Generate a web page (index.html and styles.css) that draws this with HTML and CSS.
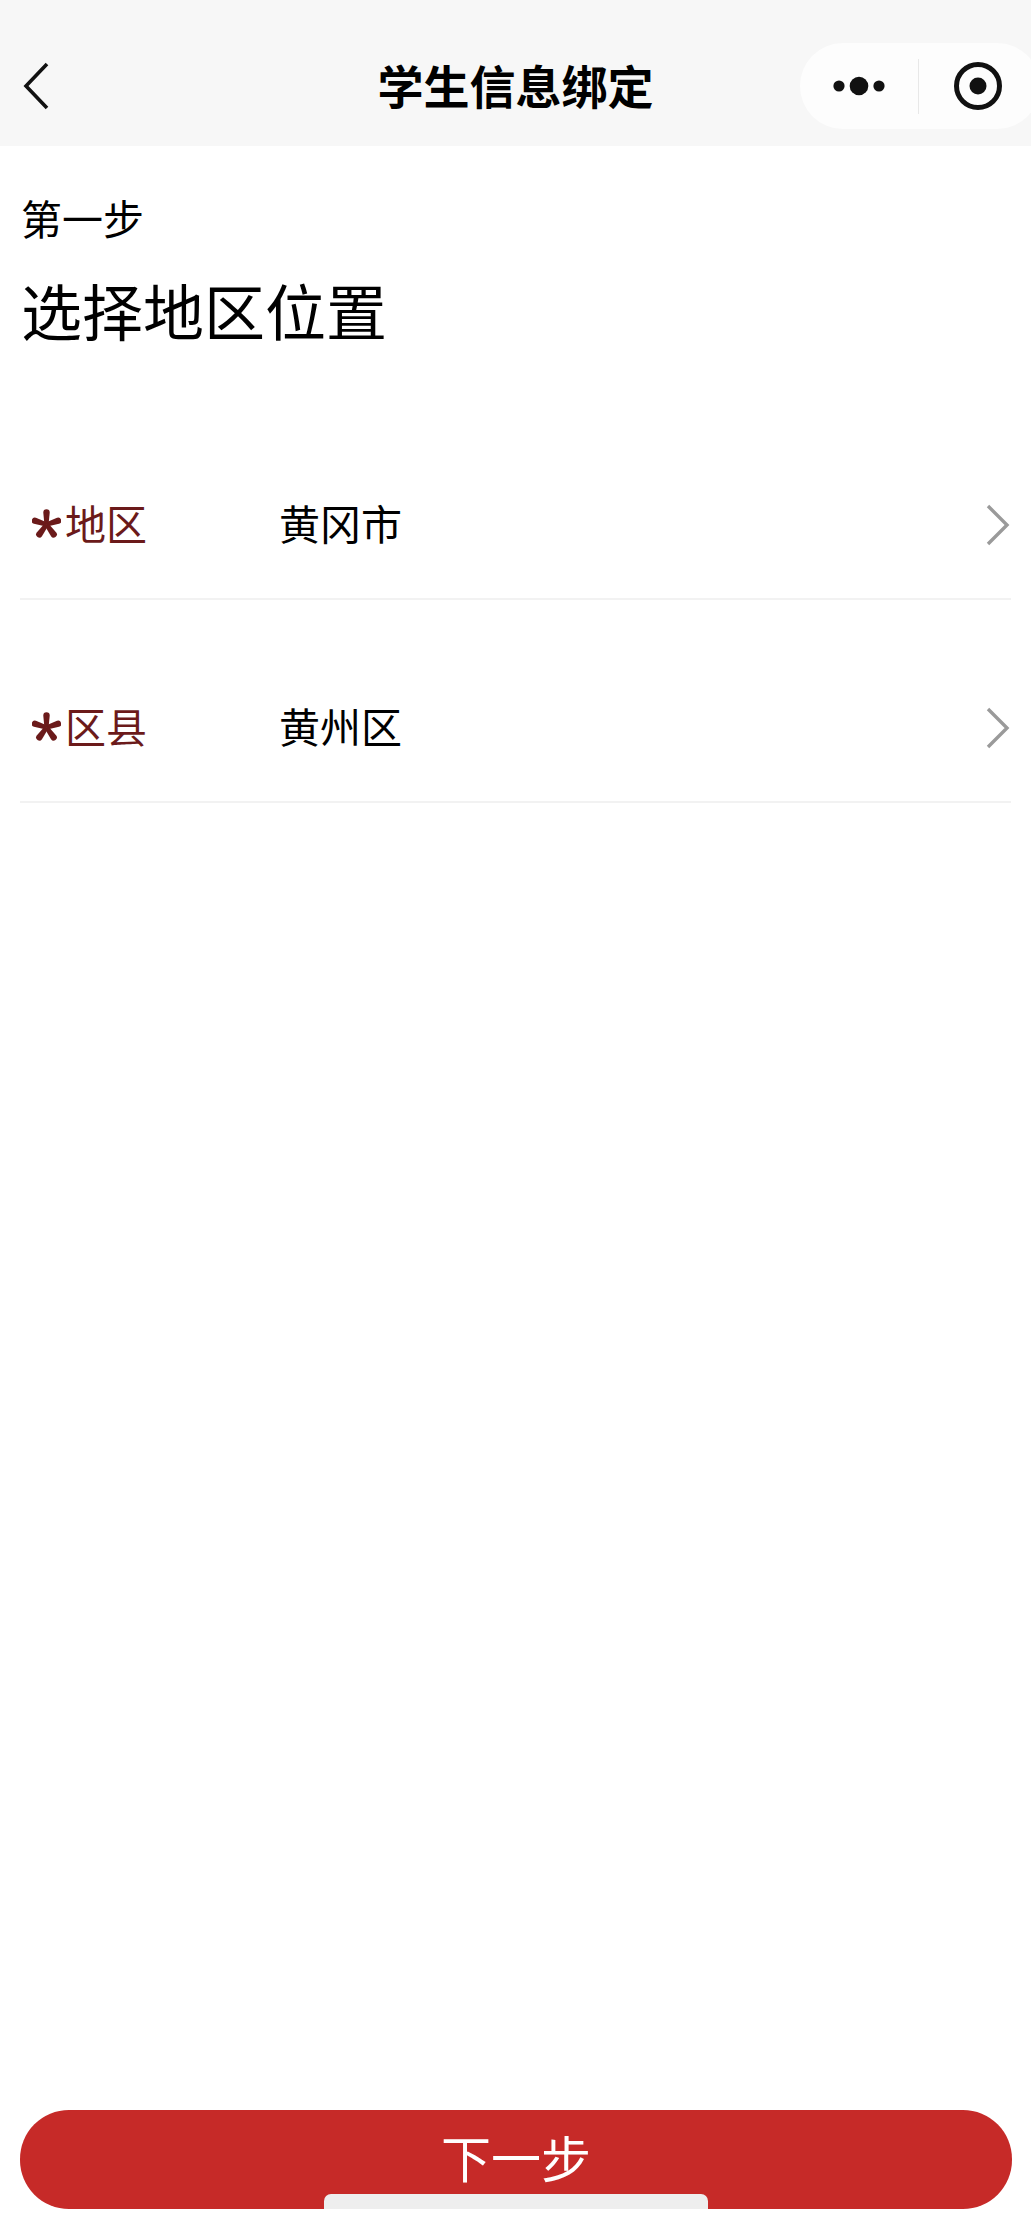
FILE: index.html
```html
<!DOCTYPE html>
<html lang="zh-CN">
<head>
  <meta charset="UTF-8">
  <title>学生信息绑定</title>
  <link rel="stylesheet" href="styles.css">
</head>
<body>

<svg class="defs" width="0" height="0">
  <defs>
    <path id="petal" d="M12 15 L10.9 3.3 A3.1 3.1 0 0 1 17.1 3.3 L16 15 Z"/>
    <symbol id="star" viewBox="0 0 28 28">
      <g fill="#6b1a1a">
        <use href="#petal"/>
        <use href="#petal" transform="rotate(72 14 15)"/>
        <use href="#petal" transform="rotate(144 14 15)"/>
        <use href="#petal" transform="rotate(216 14 15)"/>
        <use href="#petal" transform="rotate(288 14 15)"/>
      </g>
    </symbol>
  </defs>
</svg>

<div class="page">
  <header class="navbar">
    <svg class="back" width="28" height="48" viewBox="0 0 28 48"><path d="M25 2 L4 24 L25 46" fill="none" stroke="#111" stroke-width="3.6"/></svg>
    <h1 class="title">学生信息绑定</h1>
    <div class="capsule">
      <svg class="more" width="52" height="20" viewBox="0 0 52 20"><circle cx="6" cy="10" r="5.6" fill="#111"/><circle cx="26" cy="10" r="9.3" fill="#111"/><circle cx="46" cy="10" r="5.6" fill="#111"/></svg>
      <span class="capsule-line"></span>
      <svg class="target" width="48" height="48" viewBox="0 0 48 48"><circle cx="24" cy="24" r="21.5" fill="none" stroke="#111" stroke-width="5"/><circle cx="24" cy="24" r="8.5" fill="#111"/></svg>
    </div>
  </header>

  <main class="content">
    <p class="step">第一步</p>
    <h2 class="heading">选择地区位置</h2>

    <div class="form">
      <div class="row">
        <span class="label">
          <svg class="star"><use href="#star"/></svg>
          地区
        </span>
        <span class="value">黄冈市</span>
        <svg class="arrow" width="24" height="42" viewBox="0 0 24 42"><path d="M2 2 L21 21 L2 40" fill="none" stroke="#9a9a9a" stroke-width="3.4"/></svg>
      </div>
      <div class="row">
        <span class="label">
          <svg class="star"><use href="#star"/></svg>
          区县
        </span>
        <span class="value">黄州区</span>
        <svg class="arrow" width="24" height="42" viewBox="0 0 24 42"><path d="M2 2 L21 21 L2 40" fill="none" stroke="#9a9a9a" stroke-width="3.4"/></svg>
      </div>
    </div>
  </main>

  <footer class="footer">
    <button class="next">下一步</button>
    <span class="home-bar"></span>
  </footer>
</div>

</body>
</html>
```

FILE: styles.css
```css
* { box-sizing: border-box; }
html, body { margin: 0; padding: 0; background: #fff; }
body { font-family: "Noto Sans CJK SC", "Noto Sans", sans-serif; color: #000; overflow: hidden; }
.defs { position: absolute; }

.page { height: 2230px; display: flex; flex-direction: column; }

.navbar { height: 146px; flex: none; background: #f7f7f7; display: flex; align-items: center; padding: 41px 0 15px 22px; position: relative; overflow: hidden; }
.back { flex: none; }
.title { position: absolute; left: 0; right: 0; top: 54px; margin: 0; text-align: center; font-size: 46px; line-height: 60px; font-weight: 700; }
.capsule { position: absolute; left: 800px; top: 43px; width: 240px; height: 86px; background: #fdfdfd; border-radius: 43px; display: flex; align-items: center; padding-left: 33px; }
.more { flex: none; }
.capsule-line { flex: none; width: 1px; height: 55px; background: #e8e8e8; margin-left: 33px; margin-right: 35px; }
.target { flex: none; }

.content { flex: 1; padding: 0 20px; }
.step { margin: 42px 0 0; font-size: 41px; line-height: 58px; padding-left: 1px; }
.heading { margin: 24px 0 0; font-size: 61px; line-height: 80px; font-weight: 400; padding-left: 1px; }

.form { margin-top: 47px; }
.row { height: 203px; padding-top: 96px; border-bottom: 2px solid #f2f2f2; display: flex; align-items: flex-start; }
.label { width: 259px; flex: none; display: flex; align-items: center; gap: 4px; padding-left: 12px; font-size: 41px; line-height: 58px; color: #6b1a1a; }
.star { width: 29px; height: 29px; flex: none; margin-top: 3px; }
.value { flex: 1; font-size: 41px; line-height: 58px; }
.arrow { flex: none; margin-top: 11px; margin-right: 1px; }

.footer { flex: none; padding: 0 19px 21px 20px; position: relative; }
.next { display: block; width: 100%; height: 99px; border: 0; border-radius: 49px; background: #c62a28; color: #fff; font-family: inherit; font-size: 50px; padding: 0 0 8px; }
.home-bar { position: absolute; left: 324px; bottom: 21px; width: 384px; height: 15px; background: #eee; border-radius: 7px 7px 0 0; }
```
